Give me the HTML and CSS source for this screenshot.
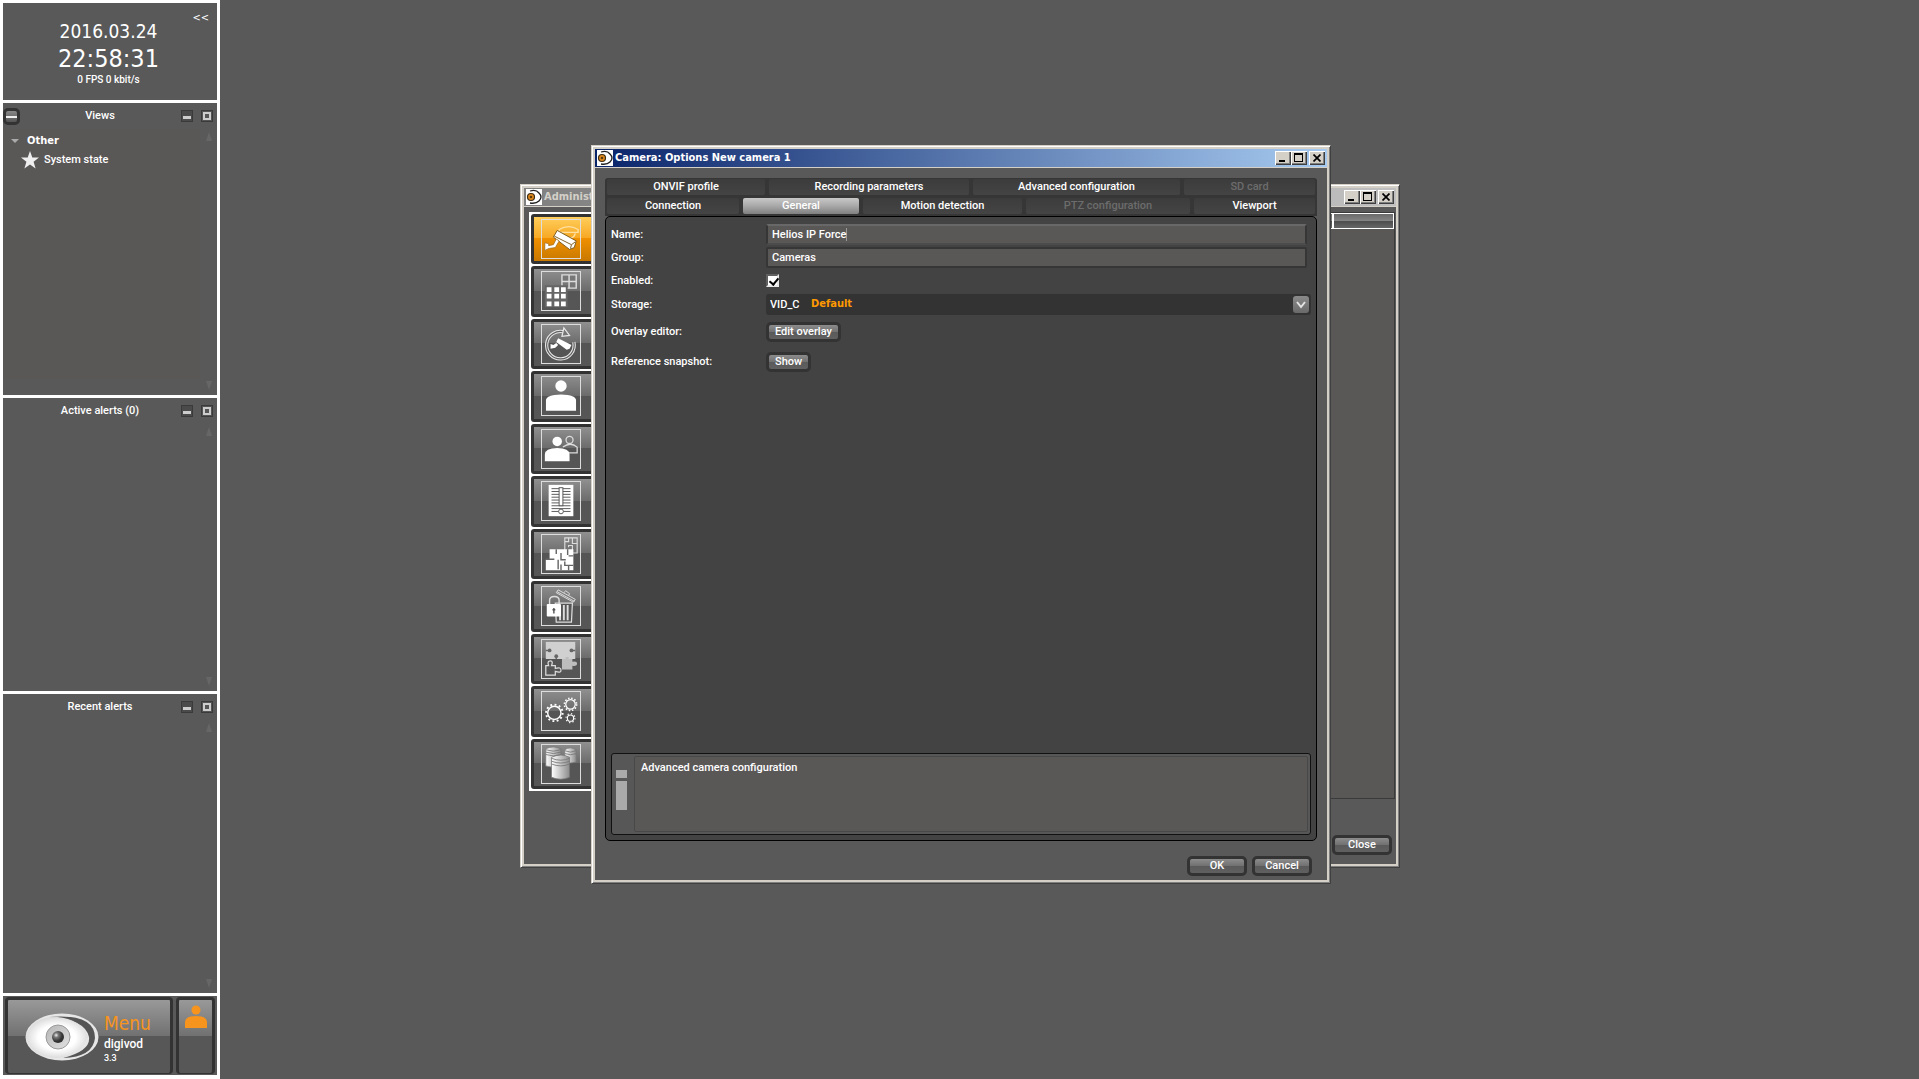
FILE: index.html
```html
<!DOCTYPE html>
<html lang="en">
<head>
<meta charset="utf-8">
<title>digivod 3.3</title>
<link rel="stylesheet" href="styles.css">
</head>
<body>
<svg class="defs" aria-hidden="true">
  <defs>
    <linearGradient id="steel" x1="0" x2="1"><stop offset="0" stop-color="#fff"/><stop offset="1" stop-color="#8c8c8c"/></linearGradient>
    <radialGradient id="ball"><stop offset="0.6" stop-color="#fff"/><stop offset="1" stop-color="#dcdcdc"/></radialGradient>
    <linearGradient id="iris" x1="0" y1="0" x2="1" y2="1"><stop offset="0" stop-color="#b5b5b5"/><stop offset="1" stop-color="#e2e2e2"/></linearGradient>
    <radialGradient id="pupil" cx="0.35" cy="0.35"><stop offset="0" stop-color="#eee"/><stop offset="0.4" stop-color="#777"/><stop offset="1" stop-color="#333"/></radialGradient>
    <symbol id="app" viewBox="0 0 16 16">
      <rect width="16" height="16" fill="#fff"/>
      <path d="M4 2Q10 0 13 4Q17 8 13 12Q10 15 4 14" fill="none" stroke="#222" stroke-width="1.3"/>
      <circle cx="5" cy="8" r="3.500" fill="#e08a1c" stroke="#3c2c14" stroke-width="1.2"/>
      <circle cx="5" cy="8" r="1.300" fill="#5b3a10"/>
    </symbol>
    <symbol id="person" viewBox="0 0 32 32">
      <circle cx="16" cy="6" r="6"/><path d="M0 32V22Q0 15 16 15Q32 15 32 22V32Z"/>
    </symbol>
  </defs>
</svg>

<aside class="sidebar">
  <section class="clock">
    <button class="collapse" aria-label="Collapse sidebar">&lt;&lt;</button>
    <div class="date">2016.03.24</div>
    <div class="time">22:58:31</div>
    <div class="rate">0 FPS 0 kbit/s</div>
  </section>

  <section class="pane">
    <header class="pane-head">
      <button class="toggle" aria-label="Toggle list"></button>
      <h2>Views</h2>
      <button class="mini mini-min" aria-label="Minimize"></button>
      <button class="mini mini-max" aria-label="Maximize"></button>
    </header>
    <div class="pane-body">
      <div class="tree">
        <div class="tree-group"><i class="twist"></i>Other</div>
        <div class="tree-item">
          <svg width="18" height="18" viewBox="0 0 18 18"><path d="M9 0L11.300 6.500H18L12.600 10.700L14.600 17.500L9 13.400L3.400 17.500L5.400 10.700L0 6.500H6.700Z" fill="#eee"/></svg>
          System state
        </div>
      </div>
      <div class="scroll"><i class="up"></i><i class="down"></i></div>
    </div>
  </section>

  <section class="pane">
    <header class="pane-head">
      <h2>Active alerts (0)</h2>
      <button class="mini mini-min" aria-label="Minimize"></button>
      <button class="mini mini-max" aria-label="Maximize"></button>
    </header>
    <div class="pane-body"><div class="scroll"><i class="up"></i><i class="down"></i></div></div>
  </section>

  <section class="pane">
    <header class="pane-head">
      <h2>Recent alerts</h2>
      <button class="mini mini-min" aria-label="Minimize"></button>
      <button class="mini mini-max" aria-label="Maximize"></button>
    </header>
    <div class="pane-body"><div class="scroll"><i class="up"></i><i class="down"></i></div></div>
  </section>

  <footer class="menu-bar">
    <button class="menu">
      <svg width="74" height="48" viewBox="0 0 74 48">
        <ellipse cx="37" cy="24" rx="36.500" ry="23.500" fill="#e6e6e6"/>
        <path d="M24 4Q70 0 70 25Q68 44 38 45Q66 38 64 24Q60 6 24 4Z" fill="#555"/>
        <path d="M1 24Q6 4 32 4Q56 6 63 24Q56 43 32 45Q6 44 1 24Z" fill="url(#ball)"/>
        <circle cx="33" cy="24" r="12" fill="url(#iris)" stroke="#9a9a9a"/>
        <circle cx="33" cy="24" r="6" fill="url(#pupil)"/>
      </svg>
      <span class="menu-text">
        <span class="menu-title">Menu</span>
        <span class="menu-name">digivod</span>
        <span class="menu-version">3.3</span>
      </span>
    </button>
    <button class="user" aria-label="User">
      <svg width="24" height="24" viewBox="0 0 24 24" fill="#f7941d"><circle cx="12" cy="5" r="4.500"/><path d="M1 23V17Q1 11 12 11Q23 11 23 17V23Z"/></svg>
    </button>
  </footer>
</aside>

<main>
  <section class="window admin" aria-label="Administration">
    <header class="title">
      <svg width="16" height="16"><use href="#app"/></svg>
      <h1>Administration</h1>
      <div class="caption">
        <button class="cap-min" aria-label="Minimize"></button><button class="cap-max" aria-label="Maximize"></button><button class="cap-close" aria-label="Close window"><svg width="8" height="8" viewBox="0 0 8 8"><path d="M0.500 0.500L7.500 7.500M7.500 0.500L0.500 7.500" stroke="#000" stroke-width="1.700"/></svg></button>
      </div>
    </header>
    <div class="client">
      <div class="admin-main">
        <nav class="tools">
          <button class="tool active" aria-label="Cameras">
            <svg viewBox="0 0 40 40"><g fill="none" stroke="#ffe0a0"><path d="M18 10Q28 4 38 10V13H18Z" stroke-width="1.500"/><path d="M21 14Q22 19 28 19Q34 19 35 14" stroke-width="1.500"/></g><path d="M16 11L36 22L34 29L29 31L12 18Z" fill="#fff" stroke="#7a5a20"/><path d="M13 17L31 26L35 23M31 26L30 30" fill="none" stroke="#7a5a20"/><path d="M3 24L7 25V27L12 26L15 20L18 22L14 29L7 30L3 32Z" fill="#fff" stroke="#9a6a20" stroke-width="0.700"/></svg>
          </button>
          <button class="tool" aria-label="Views">
            <svg viewBox="0 0 40 40"><path d="M21 3H36V17H21ZM28.500 3V17M21 10H36" fill="#777" stroke="#ddd" stroke-width="1.500"/><rect x="3" y="14" width="24" height="23" fill="#666"/><path d="M5 16h5v5h-5zM13 16h5v5h-5zM20 16h5v5h-5zM5 23h5v5h-5zM13 23h5v5h-5zM20 23h5v5h-5zM5 31h5v5h-5zM13 31h5v5h-5zM20 31h5v5h-5z" fill="#fff"/></svg>
          </button>
          <button class="tool" aria-label="Camera patrols">
            <svg viewBox="0 0 40 40"><g fill="none"><path d="M24 7.500A14.500 14.500 0 1 0 33.500 18" stroke="#e8e8e8" stroke-width="3.500"/><path d="M24 7.500A14.500 14.500 0 1 0 33.500 18" stroke="#606060" stroke-width="1.300"/><path d="M23 3L29 11L21 12Z" stroke="#e8e8e8" fill="#777" stroke-width="1.300"/></g><path d="M17 14L31 21L29 25L26 26L15 18ZM9 20L12 21L15 19L17 21L14 24L9 25Z" fill="#fff"/></svg>
          </button>
          <button class="tool" aria-label="Users"><svg viewBox="0 0 40 40"><use href="#person" x="4" y="3" width="32" height="33" fill="#fff"/></svg></button>
          <button class="tool" aria-label="Groups">
            <svg viewBox="0 0 40 40"><g fill="none" stroke="#ddd" stroke-width="1.300"><circle cx="29" cy="10.500" r="3.700"/><path d="M22 18Q30 12 37 18V24H27"/></g><circle cx="16" cy="12" r="5" fill="#fff"/><path d="M3 33V26Q3 19 16 19Q29 19 29 26V33Z" fill="#fff"/></svg>
          </button>
          <button class="tool" aria-label="Logs">
            <svg viewBox="0 0 40 40"><rect x="7" y="3" width="26" height="33" fill="#fff"/><path d="M10 7H30M10 10H30M10 13H30M10 16H30M10 19H30M10 22H30M10 25H30M10 28H30M10 31H30" stroke="#555"/><rect x="18" y="6" width="4" height="19" fill="#fff" stroke="#555"/><circle cx="20" cy="31" r="2.500" fill="#fff" stroke="#555"/></svg>
          </button>
          <button class="tool" aria-label="Floor plans">
            <svg viewBox="0 0 40 40"><path d="M24 3H37V19H24ZM28 3V7H24M32 3V9H37M28 13V11H32V19" fill="none" stroke="#ddd" stroke-width="1.200"/><path d="M8 15H33V37H4V26H8Z" fill="#fff"/><path d="M15 15V20M20 19V26H25M27 15V21M33 22H28M4 25.500H13M17 26V36M20 31V37M24 28V32H33M28 32V37" fill="none" stroke="#666" stroke-width="1.500"/></svg>
          </button>
          <button class="tool" aria-label="Retention">
            <svg viewBox="0 0 40 40"><path d="M16 5L34 15M17 3L35 13L33 16L15 6ZM23 6L25 4L29 7L28 9" fill="none" stroke="#ddd"/><path d="M14 17H32L31 37H15Z" fill="#555" stroke="#ddd" stroke-width="1.300"/><path d="M19 19V35M23 19V35M27 19V35" stroke="#ddd" stroke-width="2"/><path d="M8 19V14Q8 10 13 10Q18 10 18 14V19" fill="none" stroke="#ddd" stroke-width="1.500"/><rect x="5" y="18" width="15" height="13" rx="1" fill="#fff"/><path d="M12.500 22V28M11 24H14" stroke="#555" stroke-width="1.500"/></svg>
          </button>
          <button class="tool" aria-label="Modules">
            <svg viewBox="0 0 40 40"><path d="M4 2H35V20H4Z" fill="#d0d0d0"/><path d="M4 11H7M35 11H32M15 20V18M26 20V18" stroke="#666" stroke-width="1.500"/><g fill="#666"><circle cx="8" cy="11" r="2"/><circle cx="31" cy="11" r="2"/><circle cx="15" cy="17" r="2"/></g><path d="M21 20H25V18H28V20H32V23Q37 22 37 25Q37 28 32 27V31H21Z" fill="#bdbdbd"/><path d="M4 27H7Q5 22 9 22Q12 22 10 27H14V30Q20 28 20 32Q20 35 14 33V37H4Z" fill="#555" stroke="#ddd" stroke-width="1.300"/></svg>
          </button>
          <button class="tool" aria-label="Settings">
            <svg viewBox="0 0 40 40"><g fill="none" stroke="#fff"><circle cx="13" cy="22" r="7" stroke-width="1.500"/><circle cx="13" cy="22" r="8.700" stroke-width="2" stroke-dasharray="2 2.550"/><circle cx="30" cy="13" r="5" stroke-width="1.300"/><circle cx="30" cy="13" r="6.500" stroke-width="1.600" stroke-dasharray="1.600 1.800"/><circle cx="30" cy="27.500" r="3.300" stroke-width="1.200"/><circle cx="30" cy="27.500" r="4.700" stroke-width="1.300" stroke-dasharray="1.300 2.390"/></g></svg>
          </button>
          <button class="tool" aria-label="Storage">
            <svg viewBox="0 0 40 40"><g fill="url(#steel)" stroke="#777" stroke-width="0.800"><path d="M4 4Q12 0 20 4V22Q12 25 4 22Z"/><path d="M24 5Q30 1 36 5V18Q30 20 24 18Z"/><path d="M10 13Q20 8 29 13V34Q20 38 10 34Z"/></g><g fill="none" stroke="#777" stroke-width="0.900"><path d="M4 5Q12 8 20 5M4 7.500Q12 10.500 20 7.500M4 10Q12 13 20 10M24 6Q30 9 36 6M24 9Q30 11.500 36 9M10 14Q20 18 29 14M10 17Q20 21 29 17M10 20Q20 24 29 20"/></g></svg>
          </button>
        </nav>
        <div class="list"><div class="list-head"><span></span><span></span></div></div>
      </div>
      <footer class="actions"><button class="btn wide">Close</button></footer>
    </div>
  </section>

  <section class="window options" role="dialog" aria-labelledby="options-title">
    <header class="title">
      <svg width="16" height="16"><use href="#app"/></svg>
      <h1 id="options-title">Camera: Options New camera 1</h1>
      <div class="caption">
        <button class="cap-min" aria-label="Minimize"></button><button class="cap-max" aria-label="Maximize"></button><button class="cap-close" aria-label="Close window"><svg width="8" height="8" viewBox="0 0 8 8"><path d="M0.500 0.500L7.500 7.500M7.500 0.500L0.500 7.500" stroke="#000" stroke-width="1.700"/></svg></button>
      </div>
    </header>
    <div class="client">
      <div class="tabs" role="tablist">
        <div class="tab-row upper">
          <button role="tab">ONVIF profile</button>
          <button role="tab">Recording parameters</button>
          <button role="tab">Advanced configuration</button>
          <button role="tab" disabled>SD card</button>
        </div>
        <div class="tab-row lower">
          <button role="tab">Connection</button>
          <button role="tab" aria-selected="true">General</button>
          <button role="tab">Motion detection</button>
          <button role="tab" disabled>PTZ configuration</button>
          <button role="tab">Viewport</button>
        </div>
      </div>
      <div class="panel" role="tabpanel">
        <form class="form">
          <label for="name">Name:</label>
          <div class="field focused"><input id="name" type="text" value="Helios IP Force"></div>
          <label for="group">Group:</label>
          <div class="field"><input id="group" type="text" value="Cameras"></div>
          <label for="enabled">Enabled:</label>
          <input id="enabled" class="check" type="checkbox" checked>
          <label for="storage">Storage:</label>
          <div class="combo">
            <select id="storage"><option>VID_C</option></select>
            <span class="tag">Default</span>
            <span class="drop"><svg width="10" height="8" viewBox="0 0 10 8"><path d="M1 1L5 6L9 1" fill="none" stroke="#e4e4e4" stroke-width="2"/></svg></span>
          </div>
          <label for="overlay">Overlay editor:</label>
          <button id="overlay" class="btn" type="button">Edit overlay</button>
          <label for="snapshot">Reference snapshot:</label>
          <button id="snapshot" class="btn" type="button">Show</button>
        </form>
        <div class="info">
          <div class="info-mark"></div>
          <p>Advanced camera configuration</p>
        </div>
      </div>
      <footer class="actions"><button class="btn wide">OK</button><button class="btn wide">Cancel</button></footer>
    </div>
  </section>
</main>
</body>
</html>
```
FILE: styles.css
```css
* { box-sizing: border-box; }

body {
  margin: 0;
  min-height: 100vh;
  display: flex;
  background: #595959;
  color: #fff;
  font: 500 11px/14px Roboto, "DejaVu Sans Condensed", sans-serif;
}

h1, h2, p { margin: 0; font: inherit; }
button, input, select { margin: 0; padding: 0; border: 0; color: inherit; font: inherit; }
button { background: none; }
svg { display: block; flex: none; }
.defs { position: absolute; width: 0; height: 0; }
main { flex: 1; }

/* Sidebar */
.sidebar {
  width: 220px;
  height: 100vh;
  padding: 3px 3px 4px;
  display: grid;
  grid-template-rows: 97px 292fr 293fr 299fr 79px;
  gap: 3px;
  background: #fff;
}
.sidebar > * { background: #595959; min-height: 0; }

.clock { position: relative; padding: 16px 3px 0 0; text-align: center; white-space: nowrap; }
.collapse { position: absolute; top: 8px; right: 8px; font-family: "DejaVu Sans Condensed", sans-serif; }
.date, .time, .menu-title { font-family: "DejaVu Sans Condensed", "Noto Sans", sans-serif; font-weight: 400; }
.date { font-size: 19px; line-height: 24px; }
.time { font-size: 25px; line-height: 32px; }
.rate { font-size: 10px; line-height: 10px; }

.pane { display: flex; flex-direction: column; }
.pane-head { position: relative; display: flex; align-items: center; gap: 8px; height: 26px; padding-right: 4px; }
.pane-head h2 { flex: 1; padding-left: 24px; text-align: center; }
.toggle {
  position: absolute;
  left: 0;
  width: 17px;
  height: 17px;
  border: 3px solid #333;
  border-radius: 5px;
  background: linear-gradient(transparent 5px, #eee 5px, #eee 7px, transparent 7px), linear-gradient(#888, #555);
}
.mini { width: 12px; height: 12px; border: 1px solid #3a3a3a; background: #4a4a4a; }
.mini-min { background: linear-gradient(#ccc, #ccc) 1px 5px / 8px 3px no-repeat #4a4a4a; }
.mini-max { background: #555; box-shadow: inset 0 0 0 1px #555, inset 0 0 0 3px #ccc; }
.pane-body { flex: 1; display: flex; justify-content: flex-end; }
.tree { flex: 1; margin-bottom: 16px; padding: 4px 0 0 8px; background: #5a5757; }
.tree-group { display: flex; align-items: center; gap: 8px; height: 16px; font: 700 11px/16px "DejaVu Sans Condensed", sans-serif; }
.twist { border: 4px solid transparent; border-top-color: #aaa; border-bottom: 0; }
.tree-item { display: flex; align-items: center; gap: 5px; height: 22px; padding-left: 10px; }
.scroll { width: 17px; display: flex; flex-direction: column; justify-content: space-between; align-items: center; padding: 3px 0 5px; }
.scroll i { border: 3px solid transparent; }
.scroll .up { border-top: 0; border-bottom: 9px solid #666; }
.scroll .down { border-bottom: 0; border-top: 9px solid #666; }

.menu-bar { display: flex; gap: 3px; padding: 1px 2px; }
.menu, .user {
  border: 3px solid #333;
  border-bottom-width: 1px;
  border-radius: 4px;
  background: linear-gradient(#999, #707070 50%, #575757 50%);
}
.menu { flex: 1; display: flex; align-items: center; gap: 5px; padding-left: 17px; text-align: left; }
.menu-text { display: grid; }
.menu-title { color: #f7941d; font-size: 19px; line-height: 28px; }
.menu-name { font-size: 12px; line-height: 15px; }
.menu-version { font-size: 9px; line-height: 12px; }
.user { width: 39px; display: flex; justify-content: center; padding-top: 5px; }

/* Desktop windows */
.window {
  position: absolute;
  display: flex;
  flex-direction: column;
  padding: 3px;
  border: 1px solid;
  border-color: #d4d0c8 #404040 #404040 #d4d0c8;
  background: #d4d0c8;
  box-shadow: inset 1px 1px #fff, inset -1px -1px #808080;
}
.admin { left: 520px; top: 184px; width: 880px; height: 684px; }
.options { left: 591px; top: 145px; width: 740px; height: 739px; }
.title { display: flex; align-items: center; gap: 2px; height: 18px; margin-bottom: 1px; padding: 0 2px; }
.title h1 { flex: 1; font: 700 11px/18px "DejaVu Sans Condensed", "Noto Sans", sans-serif; white-space: nowrap; }
.admin .title { background: linear-gradient(90deg, #808080, #c0c0c0); color: #d4d0c8; }
.options .title { background: linear-gradient(90deg, #0a246a, #a6caf0); }
.caption { display: flex; }
.caption button {
  width: 16px;
  height: 14px;
  background: #d4d0c8;
  box-shadow: inset 1px 1px #fff, inset -1px -1px #404040, inset -2px -2px #808080;
}
.caption .cap-min { background: linear-gradient(#000, #000) 4px 9px / 6px 2px no-repeat #d4d0c8; }
.caption .cap-max {
  background:
    linear-gradient(#000, #000) 3px 2px / 9px 2px no-repeat,
    linear-gradient(#d4d0c8, #d4d0c8) 4px 4px / 7px 6px no-repeat,
    linear-gradient(#000, #000) 3px 2px / 9px 9px no-repeat #d4d0c8;
}
.caption .cap-close { margin-left: 2px; padding-left: 4px; }
.client { flex: 1; display: flex; flex-direction: column; background: #595959; }

.btn {
  justify-self: start;
  height: 20px;
  padding: 0 6px;
  border: 3px solid #333;
  border-radius: 5px;
  background: linear-gradient(#8c8c8c, #707070 50%, #5a5a5a 50%, #606060);
  line-height: 14px;
}
.wide { width: 60px; padding: 0; }
.actions { display: flex; justify-content: flex-end; gap: 5px; padding-right: 5px; }

/* Administration window */
.admin .client { padding: 5px 1px 9px 5px; }
.admin-main { flex: 1; display: flex; align-items: flex-start; gap: 8px; }
.tools { width: 200px; height: 579px; padding: 2px; display: grid; grid-auto-rows: 1fr; gap: 2px; background: #fff; }
.tool {
  display: flex;
  padding: 2px 7px;
  border: 3px solid #333;
  border-radius: 3px;
  background: linear-gradient(#909090, #6c6c6c 48%, #555 48%, #565656);
}
.tool.active { background: linear-gradient(#ffce5c, #f7a823 48%, #f09000 48%, #c87800); }
.tool > svg { width: 40px; height: 40px; border: 1px solid #ddd; }
.list { flex: 1; height: 587px; border: 1px solid #3a3a3a; background: #5a5757; }
.list-head { display: flex; height: 16px; gap: 2px; padding: 1px; background: #fff; }
.list-head span { flex: 1; background: linear-gradient(#6a6a6a, #858585 50%, #4c4c4c 50%, #666); }
.list-head span:last-child { flex: none; width: 59px; }
.admin .actions { padding-right: 3px; }

/* Camera options dialog */
.options .client { padding: 10px 10px 4px; }
.tabs { display: grid; gap: 3px; padding: 1px 2px 2px; border-radius: 3px 3px 0 0; background: #363636; }
.tab-row { display: grid; gap: 4px; }
.upper { grid-template-columns: 158fr 200fr 207fr 131fr; }
.lower { grid-template-columns: 132fr 116fr 159fr 164fr 121fr; }
.tab-row button { height: 16px; border-radius: 2px; background: linear-gradient(#3c3c3c, #444); line-height: 16px; white-space: nowrap; }
.tab-row button:disabled { color: #6c6c6c; }
.tab-row [aria-selected="true"] { background: linear-gradient(#c8c8c8, #a8a8a8 50%, #808080); }
.panel {
  flex: 1;
  display: flex;
  flex-direction: column;
  justify-content: space-between;
  margin-bottom: 15px;
  padding: 6px 5px 5px;
  border: 1px solid #000;
  border-radius: 5px;
  background: #434343;
}
.form {
  display: grid;
  grid-template-columns: 155px 1fr;
  grid-template-rows: 23px 23px 23px 25px 29px 31px;
  align-items: center;
}
.field { height: 21px; margin-right: 4px; border: 2px solid #363636; border-radius: 2px; background: #5a5757; }
.field input { display: block; width: 100%; height: 17px; padding: 0 4px; background: none; outline: 0; }
.focused { border-color: #686868 #363636 #4c4c4c; }
.focused input { background: linear-gradient(#999, #999) 78px 2px / 1px 13px no-repeat; }
.check {
  appearance: none;
  width: 13px;
  height: 13px;
  border: 2px solid;
  border-color: #606060 #e8e8e8 #e8e8e8 #606060;
  background: #fff;
}
.check:checked::before {
  content: "";
  display: block;
  width: 4px;
  height: 7px;
  margin-left: 3px;
  border: solid #000;
  border-width: 0 2px 2px 0;
  transform: rotate(40deg);
}
.combo { position: relative; height: 21px; border-radius: 3px; background: #333; }
.combo select { appearance: none; width: 100%; height: 21px; padding-left: 4px; background: none; }
.tag { position: absolute; left: 45px; top: 3px; color: #f90; font-family: "DejaVu Sans Condensed", sans-serif; font-weight: 700; pointer-events: none; }
.drop {
  position: absolute;
  right: 2px;
  top: 2px;
  width: 16px;
  height: 17px;
  display: grid;
  place-items: center;
  border-radius: 3px;
  background: linear-gradient(#8a8a8a, #6a6a6a);
  pointer-events: none;
}
.info { display: flex; gap: 7px; height: 82px; padding: 2px 2px 2px 4px; border: 1px solid #111; border-radius: 3px; background: #575757; }
.info-mark { width: 11px; height: 40px; margin-top: 14px; background: linear-gradient(#aaa 8px, #575757 8px, #575757 11px, #aaa 11px); }
.info p { flex: 1; padding: 4px 6px; border: 1px solid #484848; border-radius: 2px; background: #5a5757; }
```
